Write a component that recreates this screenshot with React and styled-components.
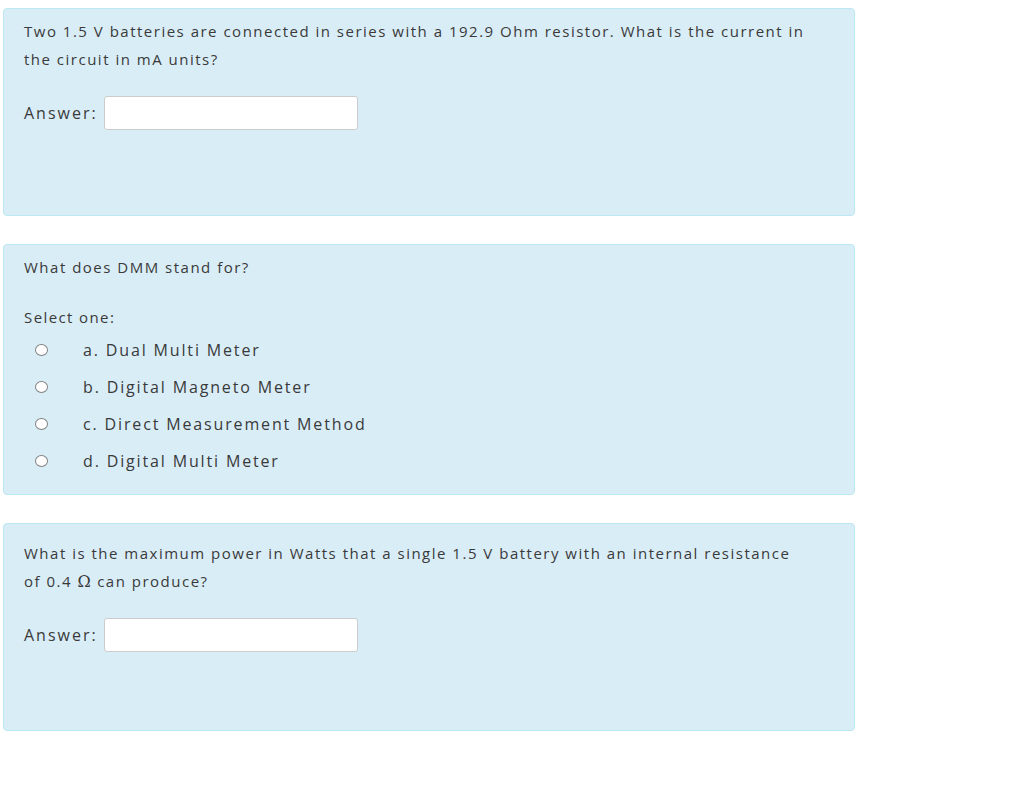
import React from "react";
import styled, { createGlobalStyle } from "styled-components";

const GlobalStyle = createGlobalStyle`
  body {
    margin: 0;
    background: #fff;
    font-family: "Open Sans", "Noto Sans", sans-serif;
    color: #3a3a3a;
  }
`;

const Page = styled.div`
  display: flex;
  flex-direction: column;
  gap: 28px;
  padding: 8px 0 0 3px;
`;

const Card = styled.div`
  box-sizing: border-box;
  width: 852px;
  min-height: ${(p) => p.$minHeight || 0}px;
  padding: ${(p) => p.$top}px 20px ${(p) => p.$bottom || 16}px 20px;
  background: #d9edf7;
  border: 1px solid #bce8f1;
  border-radius: 4px;
`;

const Question = styled.div`
  font-size: 15px;
  line-height: 28px;
  letter-spacing: 1.5px;
  white-space: nowrap;
`;

const AnswerRow = styled.div`
  display: flex;
  align-items: center;
  gap: 6px;
  margin-top: 23px;
  font-size: 16px;
  letter-spacing: 2px;
`;

const AnswerInput = styled.input`
  box-sizing: border-box;
  width: 254px;
  height: 34px;
  border: 1px solid #ccc;
  border-radius: 3px;
  background: #fff;
  outline: none;
`;

const Prompt = styled.div`
  margin-top: 22px;
  font-size: 15px;
  line-height: 28px;
  letter-spacing: 1.4px;
`;

const Options = styled.div`
  display: flex;
  flex-direction: column;
`;

const Option = styled.label`
  display: flex;
  align-items: center;
  height: 37px;
  font-size: 16px;
  letter-spacing: 1.85px;
`;

const Radio = styled.span`
  box-sizing: border-box;
  width: 13px;
  height: 12px;
  margin: 0 35px 0 11px;
  border: 1px solid #808080;
  border-radius: 50%;
  background: #fff;
`;

const Omega = styled.span`
  font-family: "DejaVu Serif", serif;
  font-size: 16px;
  line-height: 0;
  letter-spacing: 1px;
`;

const options = [
  "a. Dual Multi Meter",
  "b. Digital Magneto Meter",
  "c. Direct Measurement Method",
  "d. Digital Multi Meter",
];

export default function App() {
  return (
    <>
      <GlobalStyle />
      <Page>
        <Card $top={8} $minHeight={208}>
          <Question>
            Two 1.5 V batteries are connected in series with a 192.9 Ohm
            resistor. What is the current in
            <br />
            the circuit in mA units?
          </Question>
          <AnswerRow>
            Answer: <AnswerInput type="text" />
          </AnswerRow>
        </Card>

        <Card $top={8} $bottom={15}>
          <Question>What does DMM stand for?</Question>
          <Prompt>Select one:</Prompt>
          <Options>
            {options.map((o) => (
              <Option key={o}>
                <Radio />
                {o}
              </Option>
            ))}
          </Options>
        </Card>

        <Card $top={15} $minHeight={208}>
          <Question>
            What is the maximum power in Watts that a single 1.5 V battery with
            an internal resistance
            <br />
            of 0.4 <Omega>Ω</Omega> can produce?
          </Question>
          <AnswerRow>
            Answer: <AnswerInput type="text" />
          </AnswerRow>
        </Card>
      </Page>
    </>
  );
}
